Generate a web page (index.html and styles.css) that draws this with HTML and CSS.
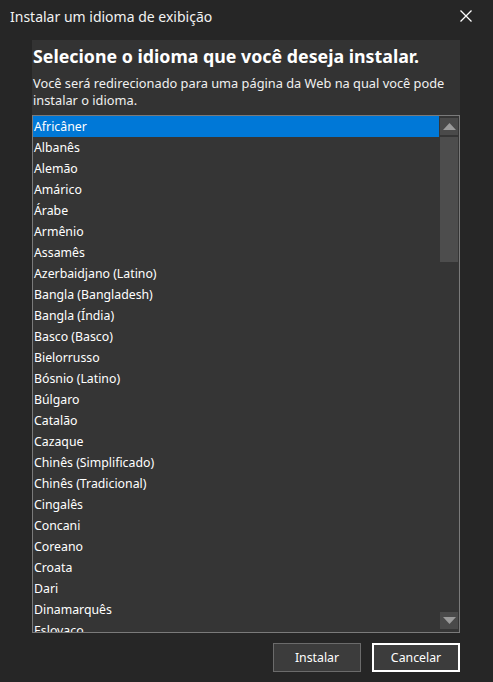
FILE: index.html
```html
<!DOCTYPE html>
<html lang="pt-BR">
<head>
<meta charset="utf-8">
<title>Instalar um idioma de exibição</title>
<link rel="stylesheet" href="styles.css">
</head>
<body>
<div class="dialog">
  <header class="titlebar">
    <span class="title">Instalar um idioma de exibição</span>
    <svg class="close" width="12" height="12" viewBox="0 0 12 12"><path d="M0.5 0.5 L11.5 11.5 M11.5 0.5 L0.5 11.5" stroke="#fff" stroke-width="1.3" fill="none"/></svg>
  </header>
  <main class="panel">
    <div class="intro">
      <h1 class="heading">Selecione o idioma que você deseja instalar.</h1>
      <p class="desc">Você será redirecionado para uma página da Web na qual você pode instalar o idioma.</p>
    </div>
    <div class="listbox">
      <ul class="items">
        <li class="item selected">Africâner</li>
        <li class="item">Albanês</li>
        <li class="item">Alemão</li>
        <li class="item">Amárico</li>
        <li class="item">Árabe</li>
        <li class="item">Armênio</li>
        <li class="item">Assamês</li>
        <li class="item">Azerbaidjano (Latino)</li>
        <li class="item">Bangla (Bangladesh)</li>
        <li class="item">Bangla (Índia)</li>
        <li class="item">Basco (Basco)</li>
        <li class="item">Bielorrusso</li>
        <li class="item">Bósnio (Latino)</li>
        <li class="item">Búlgaro</li>
        <li class="item">Catalão</li>
        <li class="item">Cazaque</li>
        <li class="item">Chinês (Simplificado)</li>
        <li class="item">Chinês (Tradicional)</li>
        <li class="item">Cingalês</li>
        <li class="item">Concani</li>
        <li class="item">Coreano</li>
        <li class="item">Croata</li>
        <li class="item">Dari</li>
        <li class="item">Dinamarquês</li>
        <li class="item">Eslovaco</li>
      </ul>
      <div class="scrollbar">
        <div class="sb-btn"><svg width="13" height="7" viewBox="0 0 13 7"><path d="M6.5 0 L13 7 L0 7 Z" fill="#9b9b9b"/></svg></div>
        <div class="sb-track"><div class="sb-thumb"></div></div>
        <div class="sb-btn"><svg width="13" height="7" viewBox="0 0 13 7"><path d="M0 0 L13 0 L6.5 7 Z" fill="#9b9b9b"/></svg></div>
      </div>
    </div>
  </main>
  <footer class="actions">
    <button class="btn">Instalar</button>
    <button class="btn focused">Cancelar</button>
  </footer>
</div>
</body>
</html>
```
FILE: styles.css
```css
* { box-sizing: border-box; }
html, body { margin: 0; padding: 0; }
body {
  background: #262626;
  color: #ffffff;
  font-family: "Noto Sans", "Open Sans", "Liberation Sans", sans-serif;
  width: 493px;
  height: 682px;
  overflow: hidden;
}
.dialog {
  display: flex;
  flex-direction: column;
  height: 682px;
}
.titlebar {
  height: 40px;
  display: flex;
  align-items: flex-start;
  justify-content: space-between;
  padding: 6px 21px 0 10px;
}
.title {
  font-size: 14px;
  line-height: 22px;
  color: #f2f2f2;
}
.close { margin-top: 4px; }
.panel {
  margin: 0 33px 0 32px;
  background: #333333;
  display: flex;
  flex-direction: column;
}
.intro { padding: 0 1px 6px 1px; }
.heading {
  margin: 0;
  font-size: 17.8px;
  font-weight: 700;
  line-height: 26px;
  padding-top: 3px;
  color: #fff;
}
.desc {
  margin: 6px 0 0 0;
  font-size: 12.8px;
  line-height: 17px;
  color: #f0f0f0;
}
.listbox {
  height: 518px;
  border: 1px solid #7a7a7a;
  background: #353535;
  display: flex;
  overflow: hidden;
}
.items {
  list-style: none;
  margin: 0;
  padding: 0;
  flex: 1;
  overflow: hidden;
}
.item {
  height: 21px;
  line-height: 21px;
  font-size: 12.3px;
  padding-left: 1px;
  color: #fff;
  white-space: nowrap;
}
.item.selected { background: #0078d7; }
.scrollbar {
  width: 20px;
  padding: 2px 1px 3px 1px;
  display: flex;
  flex-direction: column;
  gap: 2px;
}
.sb-btn {
  height: 17px;
  background: #4a4a4a;
  display: flex;
  align-items: center;
  justify-content: center;
}
.sb-track {
  flex: 1;
}
.sb-thumb {
  height: 125px;
  background: #4d4d4d;
}
.actions {
  display: flex;
  justify-content: flex-end;
  gap: 11px;
  padding: 10px 33px 0 0;
}
.btn {
  width: 88px;
  height: 29px;
  background: #3c3c3c;
  border: 1px solid #6b6b6b;
  color: #fff;
  font-family: "Noto Sans", "Open Sans", "Liberation Sans", sans-serif;
  font-size: 12.3px;
  padding: 0;
}
.btn.focused { border: 2px solid #ffffff; }
```
